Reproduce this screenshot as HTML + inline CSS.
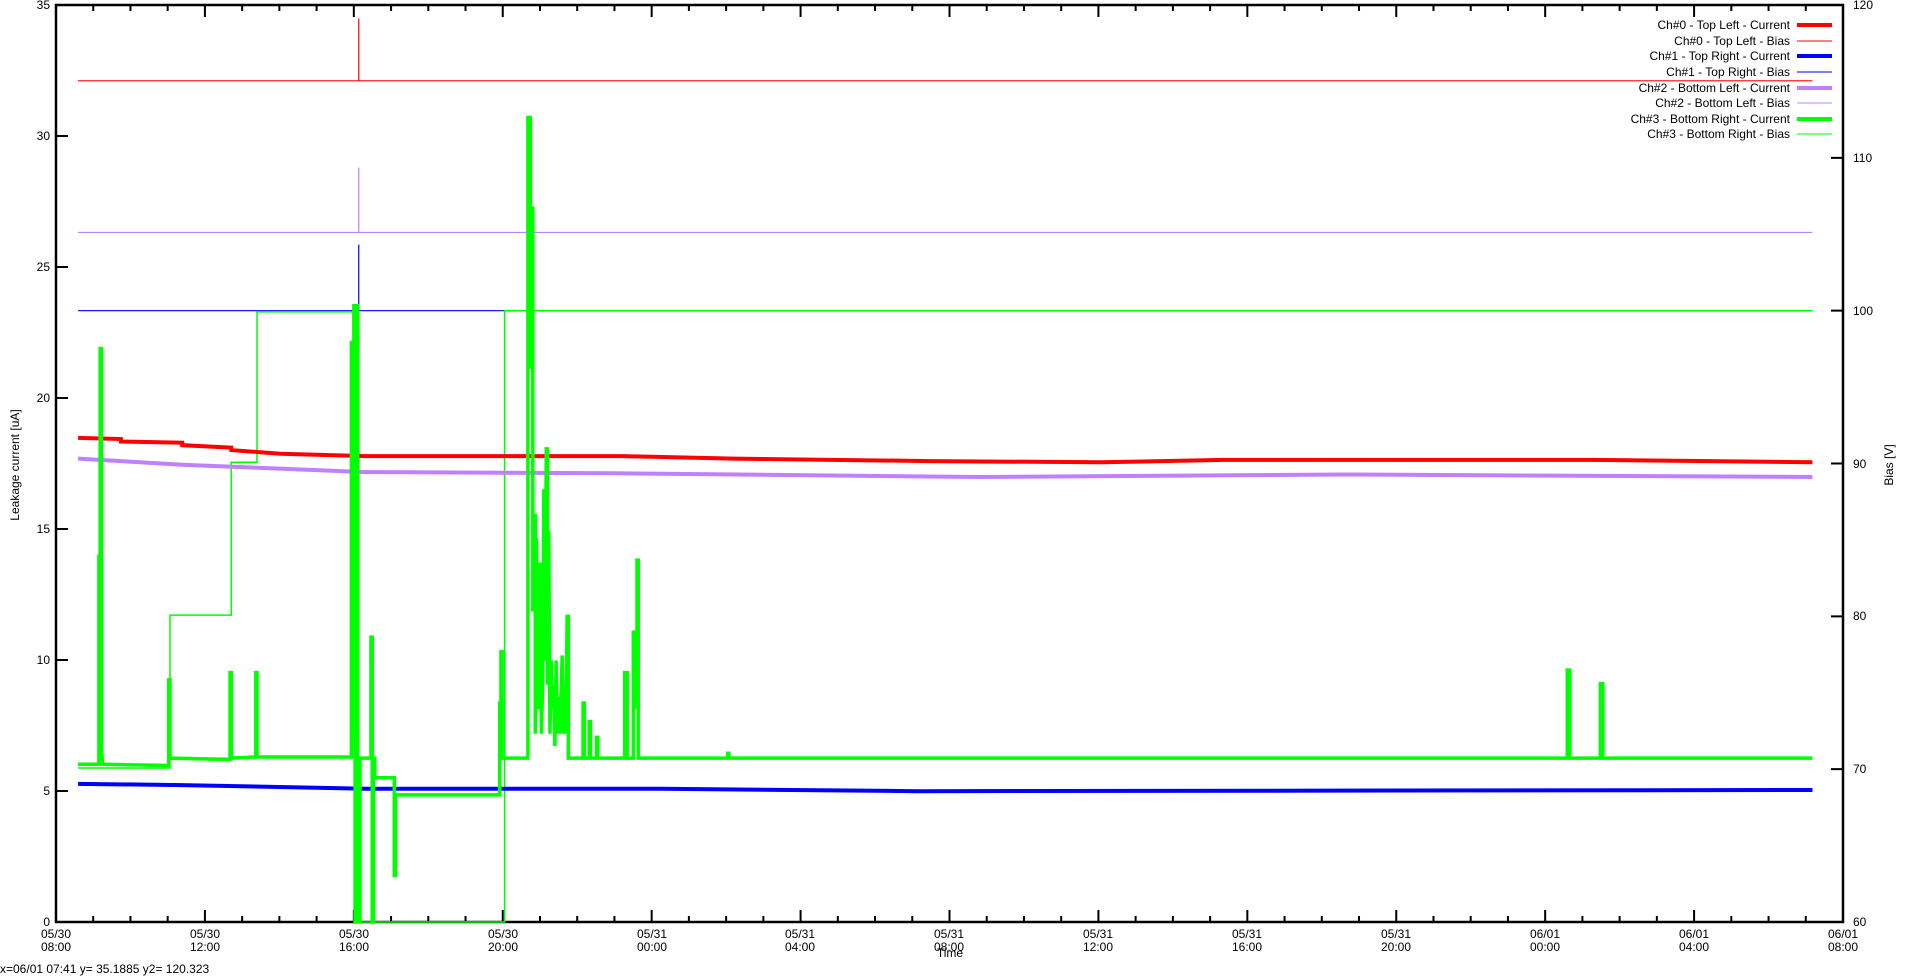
<!DOCTYPE html>
<html><head><meta charset="utf-8"><style>
html,body{margin:0;padding:0;background:#fff;width:1920px;height:977px;overflow:hidden}
svg text{font-family:"Liberation Sans",sans-serif;font-size:12px;fill:#000}
</style></head><body>
<svg width="1920" height="977" viewBox="0 0 1920 977" xmlns="http://www.w3.org/2000/svg">
<g id="ticks" stroke="#000" stroke-width="2"></g>
<rect x="56" y="5" width="1787" height="917" fill="none" stroke="#000" stroke-width="2.5"/>
<g transform="translate(56,5) scale(1.2257,1.2227) translate(-47,-4)" fill="none">
 <polyline vector-effect="non-scaling-stroke" stroke="#ff0000" stroke-width="1.2" points="65,66 294,66 294,15 294,66 1480,66"/>
 <polyline vector-effect="non-scaling-stroke" stroke="#c080ff" stroke-width="1.2" points="65,190 294,190 294,137 294,190 1480,190"/>
 <polyline vector-effect="non-scaling-stroke" stroke="#0000ff" stroke-width="1.2" points="65,254 294,254 294,200 294,254 1480,254"/>
 <polyline vector-effect="non-scaling-stroke" stroke="#00ff00" stroke-width="1.5" points="65,628 140,628 140,503 190,503 190,378 211,378 211,255 294,255 294,754 413,754 413,254 1480,254"/>
 <polyline vector-effect="non-scaling-stroke" stroke="#ff0000" stroke-width="4" points="65,358 100,359 100,361 150,362 150,364 190,366 190,368 230,371 300,373 510,373 600,375 760,377 900,378 1000,376 1300,376 1480,378"/>
 <polyline vector-effect="non-scaling-stroke" stroke="#c080ff" stroke-width="4" points="65,375 150,380 300,386 500,387 800,390 1100,388 1480,390"/>
 <polyline vector-effect="non-scaling-stroke" stroke="#0000ff" stroke-width="4" points="65,641 150,642 300,645 540,645 750,647 1480,646"/>
 <polyline vector-effect="non-scaling-stroke" stroke="#00ff00" stroke-width="3.5" stroke-linejoin="miter" points="65,625 82,625 82,455 83,455 83,285 84,285 84,610 85,625 139,626 139,556 140,556 140,620 189,621 189,550 190,550 190,620 210,619 210,550 211,550 211,619 288,619 288,280 289,280 289,600 290,600 290,250 291,250 291,754 292,754 292,250 293,250 293,754 295,754 295,620 304,620 304,521 305,521 305,754 306,754 306,620 307,620 307,636 323,636 323,716 324,716 324,650 409,650 409,575 410,575 410,533 411,533 411,620 432,620 432,96 434,96 434,300 435,300 435,170 436,170 436,500 438,420 438,600 439,440 440,580 441,500 442,460 443,600 444,560 445,400 446,540 447,367 448,367 448,560 449,434 450,600 451,540 452,580 453,560 454,610 455,540 456,600 457,570 458,600 460,536 461,600 462,560 463,600 464,504 465,504 465,620 477,620 477,575 478,575 478,620 482,620 482,590 483,590 483,620 488,620 488,603 489,603 489,620 511,620 511,550 513,550 513,620 518,620 518,517 519,517 519,580 520,530 521,530 521,458 522,458 522,620 595,620 595,616 596,616 596,620 1280,620 1280,548 1282,548 1282,620 1307,620 1307,559 1309,559 1309,620 1480,620"/>
</g>
<g text-anchor="end">
<text x="50" y="926">0</text><text x="50" y="795">5</text><text x="50" y="664">10</text><text x="50" y="533">15</text><text x="50" y="402">20</text><text x="50" y="271">25</text><text x="50" y="140">30</text><text x="50" y="9">35</text>
</g>
<g>
<text x="1853" y="926">60</text><text x="1853" y="773">70</text><text x="1853" y="620">80</text><text x="1853" y="468">90</text><text x="1853" y="315">100</text><text x="1853" y="162">110</text><text x="1853" y="9">120</text>
</g>
<g text-anchor="middle">
<text x="56" y="938">05/30</text><text x="56" y="951">08:00</text>
<text x="205" y="938">05/30</text><text x="205" y="951">12:00</text>
<text x="354" y="938">05/30</text><text x="354" y="951">16:00</text>
<text x="503" y="938">05/30</text><text x="503" y="951">20:00</text>
<text x="652" y="938">05/31</text><text x="652" y="951">00:00</text>
<text x="800" y="938">05/31</text><text x="800" y="951">04:00</text>
<text x="949" y="938">05/31</text><text x="949" y="951">08:00</text>
<text x="1098" y="938">05/31</text><text x="1098" y="951">12:00</text>
<text x="1247" y="938">05/31</text><text x="1247" y="951">16:00</text>
<text x="1396" y="938">05/31</text><text x="1396" y="951">20:00</text>
<text x="1545" y="938">06/01</text><text x="1545" y="951">00:00</text>
<text x="1694" y="938">06/01</text><text x="1694" y="951">04:00</text>
<text x="1843" y="938">06/01</text><text x="1843" y="951">08:00</text>
<text x="950" y="957">Time</text>
<text transform="translate(19,465) rotate(-90)">Leakage current [uA]</text>
<text transform="translate(1893,465) rotate(-90)">Bias [V]</text>
</g>
<text x="0" y="973">x=06/01 07:41 y= 35.1885 y2= 120.323</text>
<g text-anchor="end">
<text x="1790" y="29">Ch#0 - Top Left - Current</text>
<text x="1790" y="45">Ch#0 - Top Left - Bias</text>
<text x="1790" y="60">Ch#1 - Top Right - Current</text>
<text x="1790" y="76">Ch#1 - Top Right - Bias</text>
<text x="1790" y="92">Ch#2 - Bottom Left - Current</text>
<text x="1790" y="107">Ch#2 - Bottom Left - Bias</text>
<text x="1790" y="123">Ch#3 - Bottom Right - Current</text>
<text x="1790" y="138">Ch#3 - Bottom Right - Bias</text>
</g>
<g>
<line x1="1797" x2="1832" y1="25" y2="25" stroke="#ff0000" stroke-width="4"/>
<line x1="1797" x2="1832" y1="41" y2="41" stroke="#ff0000" stroke-width="1"/>
<line x1="1797" x2="1832" y1="56" y2="56" stroke="#0000ff" stroke-width="4"/>
<line x1="1797" x2="1832" y1="72" y2="72" stroke="#0000ff" stroke-width="1"/>
<line x1="1797" x2="1832" y1="88" y2="88" stroke="#c080ff" stroke-width="4"/>
<line x1="1797" x2="1832" y1="103" y2="103" stroke="#c080ff" stroke-width="1"/>
<line x1="1797" x2="1832" y1="119" y2="119" stroke="#00ff00" stroke-width="4"/>
<line x1="1797" x2="1832" y1="134" y2="134" stroke="#00ff00" stroke-width="1"/>
</g>
<script>
(function(){
var g=document.getElementById('ticks'),d='';
for(var i=0;i<=48;i++){var x=56+i*1787/48,L=(i%4==0)?12:6;
d+='M'+x+' 922v-'+L+'M'+x+' 5v'+L;}
for(var k=0;k<=7;k++){var y=922-k*917/7;d+='M56 '+y+'h12';}
for(var k=0;k<=6;k++){var y=922-k*917/6;d+='M1843 '+y+'h-12';}
var p=document.createElementNS('http://www.w3.org/2000/svg','path');
p.setAttribute('d',d);g.appendChild(p);
})();
</script>
</svg>
</body></html>
